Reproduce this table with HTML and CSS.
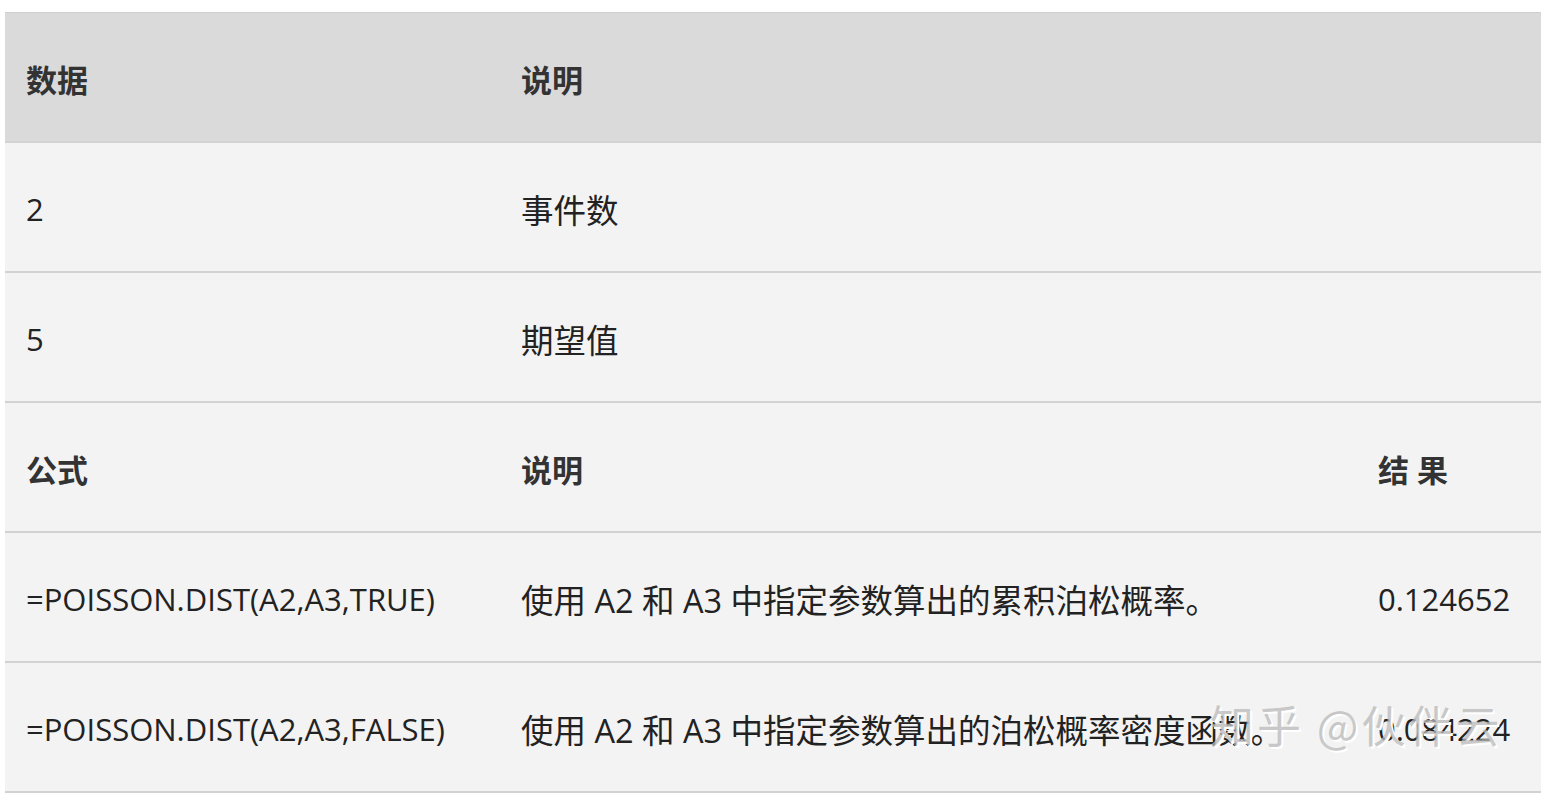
FILE: index.html
```html
<!DOCTYPE html>
<html lang="zh-CN">
<head>
<meta charset="utf-8">
<title>POISSON.DIST</title>
<link rel="stylesheet" href="styles.css">
</head>
<body>
<div class="wrap">
  <table class="data">
    <colgroup>
      <col class="c1"><col class="c2"><col class="c3">
    </colgroup>
    <thead>
      <tr class="head"><th>数据</th><th>说明</th><th></th></tr>
    </thead>
    <tbody>
      <tr><td>2</td><td class="desc">事件数</td><td></td></tr>
      <tr><td>5</td><td class="desc">期望值</td><td></td></tr>
      <tr class="sub"><th>公式</th><th>说明</th><th>结 果</th></tr>
      <tr><td>=POISSON.DIST(A2,A3,TRUE)</td><td class="desc">使用 A2 和 A3 中指定参数算出的累积泊松概率。</td><td>0.124652</td></tr>
      <tr><td>=POISSON.DIST(A2,A3,FALSE)</td><td class="desc">使用 A2 和 A3 中指定参数算出的泊松概率密度函数。</td><td>0.084224</td></tr>
    </tbody>
  </table>
  <div class="watermark">知乎 @伙伴云</div>
</div>
</body>
</html>
```
FILE: styles.css
```css
html, body {
  margin: 0;
  padding: 0;
  background: #ffffff;
}
body {
  font-family: "Open Sans", "Noto Sans CJK SC", sans-serif;
  color: #222;
}
.wrap {
  position: relative;
  padding: 12px 1px 0 5px;
}
.data {
  width: 100%;
  border-collapse: collapse;
  table-layout: fixed;
  font-size: 31px;
}
.c1 { width: 495px; }
.c2 { width: 857px; }
.c3 { width: auto; }
.data th, .data td {
  height: 130px;
  box-sizing: border-box;
  padding: 4px 0 0 21px;
  text-align: left;
  vertical-align: middle;
  border-bottom: 2px solid #d2d2d2;
  background: #f3f3f3;
  white-space: nowrap;
  overflow: visible;
}
.data td.desc {
  font-size: 32.5px;
}
.data th {
  font-weight: 700;
  color: #333;
}
.head th {
  background: #dadada;
  border-top: 1px solid #cfcfcf;
  height: 129px;
}
.watermark {
  position: absolute;
  left: 1210px;
  top: 692px;
  font-family: "Noto Sans CJK SC", sans-serif;
  font-size: 44px;
  color: rgba(185, 185, 185, 0.75);
  text-shadow: 2px 2px 0 #ffffff;
  letter-spacing: 3px;
  white-space: nowrap;
}
```
